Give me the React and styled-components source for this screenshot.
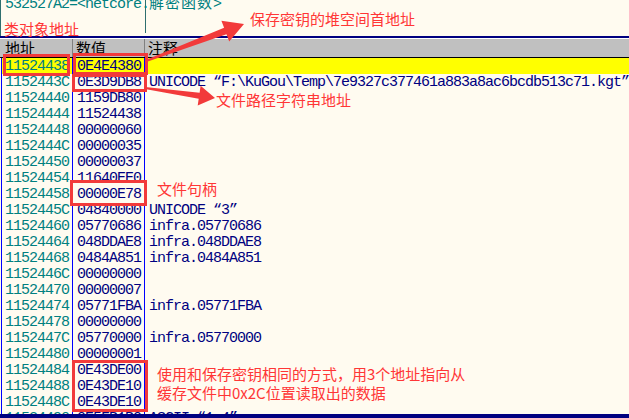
import React from 'react';
import styled, { createGlobalStyle } from 'styled-components';

const GlobalStyle = createGlobalStyle`
  html, body { margin: 0; padding: 0; background: #fffbf0; }
  body { font-family: "Liberation Mono", monospace; }
`;

const MONO = `"Liberation Mono", "Noto Sans CJK SC", monospace`;
const CJK = `"Noto Sans CJK SC", "Noto Sans", sans-serif`;
const RED = '#f23a3a';

const Screen = styled.div`
  position: relative;
  width: 629px;
  height: 418px;
  overflow: hidden;
  background: #fffbf0;
  display: flex;
  flex-direction: column;
`;

const InfoPane = styled.div`
  flex: none;
  height: 36px;
  box-sizing: border-box;
  border-left: 1px solid #2f6f6f;
  background: linear-gradient(#2f6f6f, #2f6f6f) 144px 0 / 1px 33px no-repeat, #fffbf0;
  overflow: hidden;
`;

const InfoText = styled.div`
  font-family: ${MONO};
  font-size: 15px;
  letter-spacing: -1px;
  line-height: 18px;
  color: #008080;
  margin-top: -4px;
  padding-left: 4px;
  white-space: pre;
`;

const Wide = styled.span`
  letter-spacing: 1px;
`;

const DumpPane = styled.div`
  flex: 1;
  min-height: 0;
  display: flex;
  flex-direction: column;
  border-top: 2px solid #000080;
  border-bottom: 4px solid #000080;
`;

const Header = styled.div`
  flex: none;
  display: grid;
  grid-template-columns: 73px 72px 1fr;
  height: 18px;
  border-top: 1px solid #ffffff;
  border-bottom: 1px solid #000000;
  background: #c0c0c0;
`;

const HeadCell = styled.div`
  font-family: ${CJK};
  font-size: 15px;
  line-height: 18px;
  color: #000;
  padding-left: ${p => p.$pad}px;
  border-right: ${p => (p.$last ? 'none' : '1px solid #808080')};
`;

const Rows = styled.div`
  flex: 1;
  min-height: 0;
  overflow: hidden;
  margin-left: 1px;
  border-left: 1px solid #0000ff;
`;

const Row = styled.div`
  display: grid;
  grid-template-columns: 71px 72px 1fr;
  height: 16px;
  background: ${p => (p.$hl ? '#ffff00' : 'transparent')};
`;

const Cell = styled.div`
  font-family: ${MONO};
  font-size: 15px;
  letter-spacing: -1px;
  line-height: 18px;
  white-space: pre;
  padding-left: ${p => p.$pad}px;
  color: ${p => p.$color};
  border-right: ${p => (p.$line ? '1px solid #0000ff' : 'none')};
`;

const Overlay = styled.svg`
  position: absolute;
  left: 0;
  top: 0;
  pointer-events: none;
`;

const Note = styled.div`
  position: absolute;
  left: ${p => p.$x}px;
  top: ${p => p.$y}px;
  font-family: ${CJK};
  font-size: 15px;
  line-height: ${p => p.$lh || 15}px;
  color: #ff3636;
  white-space: pre;
`;

const rows = [
  ['11524438', '0E4E4380', ''],
  ['1152443C', '0E3D9DB8', 'UNICODE “F:\\KuGou\\Temp\\7e9327c377461a883a8ac6bcdb513c71.kgt”'],
  ['11524440', '1159DB80', ''],
  ['11524444', '11524438', ''],
  ['11524448', '00000060', ''],
  ['1152444C', '00000035', ''],
  ['11524450', '00000037', ''],
  ['11524454', '11640EE0', ''],
  ['11524458', '00000E78', ''],
  ['1152445C', '04840000', 'UNICODE “3”'],
  ['11524460', '05770686', 'infra.05770686'],
  ['11524464', '048DDAE8', 'infra.048DDAE8'],
  ['11524468', '0484A851', 'infra.0484A851'],
  ['1152446C', '00000000', ''],
  ['11524470', '00000007', ''],
  ['11524474', '05771FBA', 'infra.05771FBA'],
  ['11524478', '00000000', ''],
  ['1152447C', '05770000', 'infra.05770000'],
  ['11524480', '00000001', ''],
  ['11524484', '0E43DE00', ''],
  ['11524488', '0E43DE10', ''],
  ['1152448C', '0E43DE10', ''],
  ['11524490', '0E5FB1B0', 'ASCII “1.4”'],
];

function arrowPoints(x1, y1, x2, y2, tailW, neckW, headW, headL) {
  const dx = x2 - x1;
  const dy = y2 - y1;
  const L = Math.hypot(dx, dy);
  const ux = dx / L;
  const uy = dy / L;
  const px = -uy;
  const py = ux;
  const bx = x2 - ux * headL;
  const by = y2 - uy * headL;
  const pts = [
    [x1 + (px * tailW) / 2, y1 + (py * tailW) / 2],
    [bx + (px * neckW) / 2, by + (py * neckW) / 2],
    [bx + (px * headW) / 2, by + (py * headW) / 2],
    [x2, y2],
    [bx - (px * headW) / 2, by - (py * headW) / 2],
    [bx - (px * neckW) / 2, by - (py * neckW) / 2],
    [x1 - (px * tailW) / 2, y1 - (py * tailW) / 2],
  ];
  return pts.map(p => p.map(v => v.toFixed(1)).join(',')).join(' ');
}

const boxes = [
  [3, 54, 70, 76],
  [73, 53, 148, 75],
  [72, 74, 147, 92],
  [70, 180, 147, 206],
  [72, 360, 148, 412],
];

export default function App() {
  return (
    <>
      <GlobalStyle />
      <Screen>
        <InfoPane>
          <InfoText>
            532527A2=&lt;netcore.<Wide>解密函数</Wide>&gt;
          </InfoText>
        </InfoPane>
        <DumpPane>
          <Header>
            <HeadCell $pad={5}>地址</HeadCell>
            <HeadCell $pad={3}>数值</HeadCell>
            <HeadCell $pad={3} $last>注释</HeadCell>
          </Header>
          <Rows>
            {rows.map((r, i) => (
              <Row key={r[0]} $hl={i === 0}>
                <Cell $pad={3} $color="#008080" $line>{r[0]}</Cell>
                <Cell $pad={4} $color="#000080" $line>{r[1]}</Cell>
                <Cell $pad={4} $color="#000080">{r[2]}</Cell>
              </Row>
            ))}
          </Rows>
        </DumpPane>

        <Overlay width="629" height="418" viewBox="0 0 629 418">
          {boxes.map(([x1, y1, x2, y2], i) => (
            <rect
              key={i}
              x={x1 + 1.5}
              y={y1 + 1.5}
              width={x2 - x1 - 3}
              height={y2 - y1 - 3}
              fill="none"
              stroke={RED}
              strokeWidth="3"
            />
          ))}
          <polygon points={arrowPoints(146, 61, 244, 24, 2, 7, 22, 20)} fill={RED} />
          <polygon points={arrowPoints(145, 88, 215, 98, 2, 6, 20, 16)} fill={RED} />
        </Overlay>

        <Note $x={4} $y={21}>类对象地址</Note>
        <Note $x={250} $y={11}>保存密钥的堆空间首地址</Note>
        <Note $x={216} $y={92}>文件路径字符串地址</Note>
        <Note $x={157} $y={181}>文件句柄</Note>
        <Note $x={157} $y={364} $lh={19}>
          {'使用和保存密钥相同的方式，用3个地址指向从\n缓存文件中0x2C位置读取出的数据'}
        </Note>
      </Screen>
    </>
  );
}
